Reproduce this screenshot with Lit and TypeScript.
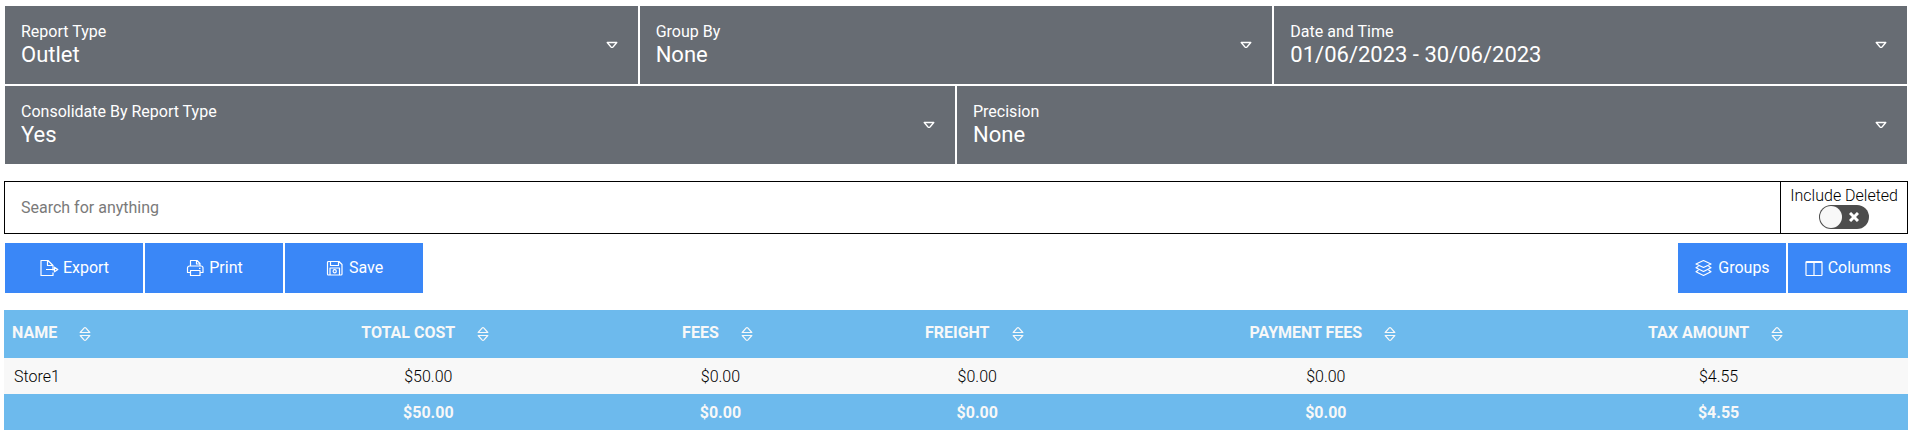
import { LitElement, html, svg, css, nothing } from "lit";
import { customElement, property, state } from "lit/decorators.js";

const icons = {
  export: svg`<path d="M14 11.500v-5L9 1.500H2v15h12v-3M8.500 1.500v5H14M7 10.500h8.500M15.500 8.200v4.600l3.300-2.300z"/>`,
  print: svg`<path d="M5.500 7V1.500H12l3 3V7M11.500 1.500V5H15M5.500 13.500h-3V9a2 2 0 0 1 2-2H16a2 2 0 0 1 2 2v4.500h-3M5.500 11.500H15v5H5.500zM14 9.300h1.500"/>`,
  save: svg`<path d="M3.500 2.500h10.500l3 3V15a1 1 0 0 1-1 1H3.500a1 1 0 0 1-1-1V3.500a1 1 0 0 1 1-1zM5.500 2.500v4h8v-4M5 16V9h9.500v7"/><circle cx="9.700" cy="12.300" r="1.600"/>`,
  groups: svg`<path d="M9.500 1.500l7.500 3.500-7.500 3.500L2 5zM4.500 7.200L2 8.800l7.500 3.700L17 8.800l-2.500-1.600M4.500 11L2 12.700l7.500 3.800 7.500-3.800-2.500-1.700"/>`,
  columns: svg`<path d="M2.800 2.500h14.400a.8.8 0 0 1 .8.8v12.400a.8.8 0 0 1-.8.8H2.800a.8.8 0 0 1-.8-.8V3.300a.8.8 0 0 1 .8-.8zM2 3.300h16M10 3v13"/>`,
};
type IconName = keyof typeof icons;

@customElement("report-filter")
class ReportFilter extends LitElement {
  @property() label = "";
  @property() value = "";
  @property({ type: Array }) options?: string[];

  static styles = css`
    :host { display: block; flex: 1; min-width: 0; }
    .tile {
      display: flex;
      align-items: center;
      padding: 16px 20px 16px 16px;
      background: #676c73;
      color: #fff;
      cursor: pointer;
    }
    .text { flex: 1; min-width: 0; display: flex; flex-direction: column; }
    .label { font-size: 16px; line-height: 19px; }
    .value {
      appearance: none;
      margin: 0;
      padding: 0;
      border: 0;
      background: none;
      color: inherit;
      font: inherit;
      font-size: 22px;
      line-height: 27px;
      height: 27px;
      text-align: left;
      cursor: pointer;
    }
    .value option { color: #222; }
    .caret { width: 12px; height: 8px; fill: none; stroke: currentColor; stroke-width: 1.3; stroke-linejoin: round; }
  `;

  render() {
    return html`<label class="tile" for="control">
      <span class="text">
        <span class="label">${this.label}</span>
        ${this.options
          ? html`<select class="value" id="control">
              ${this.options.map((o) => html`<option ?selected=${o === this.value}>${o}</option>`)}
            </select>`
          : html`<button class="value" id="control" type="button">${this.value}</button>`}
      </span>
      <svg class="caret" viewBox="0 0 12 8" aria-hidden="true"><path d="M1.200 1.500h9.600L7 6q-1 .8-2 0z"/></svg>
    </label>`;
  }
}

@customElement("tool-button")
class ToolButton extends LitElement {
  @property() icon: IconName = "export";
  @property() label = "";

  static styles = css`
    :host { display: block; }
    .button {
      display: flex;
      align-items: center;
      justify-content: center;
      gap: 4px;
      width: 100%;
      height: 50px;
      padding: 0 16px;
      border: 0;
      background: #3a87f7;
      color: #fff;
      font: inherit;
      font-size: 16px;
      line-height: 20px;
      cursor: pointer;
    }
    .icon { width: 20px; height: 18px; fill: none; stroke: currentColor; stroke-width: 1.2; stroke-linejoin: round; }
  `;

  render() {
    return html`<button class="button" type="button">
      <svg class="icon" viewBox="0 0 20 18" aria-hidden="true">${icons[this.icon] ?? nothing}</svg>
      ${this.label}
    </button>`;
  }
}

@customElement("app-root")
class AppRoot extends LitElement {
  @state() private includeDeleted = false;

  private columns = ["Name", "Total Cost", "Fees", "Freight", "Payment Fees", "Tax Amount"];
  private rows = [["Store1", "$50.00", "$0.00", "$0.00", "$0.00", "$4.55"]];
  private totals = ["", "$50.00", "$0.00", "$0.00", "$0.00", "$4.55"];

  static styles = css`
    :host {
      display: block;
      padding: 6px 3px 10px 4px;
      background: #fff;
      color: #000;
      font-family: Roboto, "Liberation Sans", sans-serif;
      font-size: 16px;
    }
    .filters { display: flex; flex-direction: column; gap: 2px; padding: 0 1px; }
    .filter-row { display: flex; gap: 2px; }
    .search { display: flex; height: 51px; margin-top: 17px; border: 1px solid #000; }
    .search-input {
      flex: 1;
      min-width: 0;
      padding: 0 16px;
      border: 0;
      outline: 0;
      background: none;
      font: inherit;
    }
    .search-input::placeholder { color: #7a7a7a; }
    .deleted {
      display: flex;
      flex-direction: column;
      align-items: center;
      padding: 4px 9px;
      border-left: 1px solid #000;
      color: #000;
      font-weight: 300;
      line-height: 19px;
      cursor: pointer;
    }
    .switch { display: grid; align-items: center; }
    .switch-input, .switch-mark { grid-area: 1 / 1; }
    .switch-input {
      appearance: none;
      display: flex;
      width: 50px;
      height: 24px;
      margin: 0;
      padding: 1px;
      box-sizing: border-box;
      border-radius: 12px;
      background: #4d4d4d;
      cursor: pointer;
    }
    .switch-input::before { content: ""; width: 22px; height: 22px; border-radius: 50%; background: #f8f8f8; }
    .switch-input:checked { justify-content: flex-end; background: #3a87f7; }
    .switch-input:checked + .switch-mark { visibility: hidden; }
    .switch-mark {
      justify-self: end;
      width: 10px;
      height: 10px;
      margin-right: 10px;
      fill: none;
      stroke: #fff;
      stroke-width: 3;
      pointer-events: none;
    }
    .toolbar { display: flex; justify-content: space-between; margin-top: 9px; padding: 0 1px; }
    .actions { display: grid; grid-template-columns: repeat(3, 138px); gap: 2px; }
    .views { display: flex; gap: 2px; }
    .report { width: 100%; margin-top: 17px; border-collapse: collapse; color: #000; }
    .head, .total { background: #6dbaed; color: #f8f8f8; }
    .head-cell { height: 44px; padding: 0 8px 4px; text-align: center; }
    .head-cell:first-child, .cell:first-child { text-align: left; }
    .sort {
      display: inline-flex;
      align-items: flex-end;
      gap: 22px;
      padding: 0 6px 0 0;
      border: 0;
      background: none;
      color: inherit;
      font: inherit;
      font-weight: 700;
      line-height: 18px;
      text-transform: uppercase;
      white-space: nowrap;
      vertical-align: middle;
      cursor: pointer;
    }
    .sort-icon { width: 12px; height: 16px; fill: none; stroke: currentColor; stroke-width: 1.2; stroke-linejoin: round; }
    .cell { height: 36px; padding: 0 10px; text-align: center; }
    .row { background: #f8f8f8; }
    .row .cell { font-weight: 300; }
    .total .cell { font-weight: 700; }
  `;

  render() {
    return html`
      <div class="filters">
        <div class="filter-row">
          <report-filter label="Report Type" value="Outlet" .options=${["Outlet"]}></report-filter>
          <report-filter label="Group By" value="None" .options=${["None"]}></report-filter>
          <report-filter label="Date and Time" value="01/06/2023 - 30/06/2023"></report-filter>
        </div>
        <div class="filter-row">
          <report-filter label="Consolidate By Report Type" value="Yes" .options=${["Yes", "No"]}></report-filter>
          <report-filter label="Precision" value="None" .options=${["None"]}></report-filter>
        </div>
      </div>

      <div class="search">
        <input class="search-input" type="search" placeholder="Search for anything" aria-label="Search for anything" />
        <label class="deleted">
          Include Deleted
          <span class="switch">
            <input
              class="switch-input"
              type="checkbox"
              .checked=${this.includeDeleted}
              @change=${(e: Event) => (this.includeDeleted = (e.target as HTMLInputElement).checked)}
            />
            <svg class="switch-mark" viewBox="0 0 10 10" aria-hidden="true"><path d="M1 1l8 8M9 1l-8 8"/></svg>
          </span>
        </label>
      </div>

      <div class="toolbar">
        <div class="actions">
          <tool-button icon="export" label="Export"></tool-button>
          <tool-button icon="print" label="Print"></tool-button>
          <tool-button icon="save" label="Save"></tool-button>
        </div>
        <div class="views">
          <tool-button icon="groups" label="Groups"></tool-button>
          <tool-button icon="columns" label="Columns"></tool-button>
        </div>
      </div>

      <table class="report">
        <thead>
          <tr class="head">
            ${this.columns.map(
              (name) => html`<th class="head-cell" scope="col">
                <button class="sort" type="button">
                  ${name}
                  <svg class="sort-icon" viewBox="0 0 12 16" aria-hidden="true">
                    <path d="M1.200 6.500L5 2.200q1-1 2 0l3.800 4.300zM1.200 9.500L5 13.800q1 1 2 0l3.800-4.300z"/>
                  </svg>
                </button>
              </th>`
            )}
          </tr>
        </thead>
        <tbody>
          ${this.rows.map((row) => html`<tr class="row">${row.map((v) => html`<td class="cell">${v}</td>`)}</tr>`)}
        </tbody>
        <tfoot>
          <tr class="total">${this.totals.map((v) => html`<td class="cell">${v}</td>`)}</tr>
        </tfoot>
      </table>
    `;
  }
}
